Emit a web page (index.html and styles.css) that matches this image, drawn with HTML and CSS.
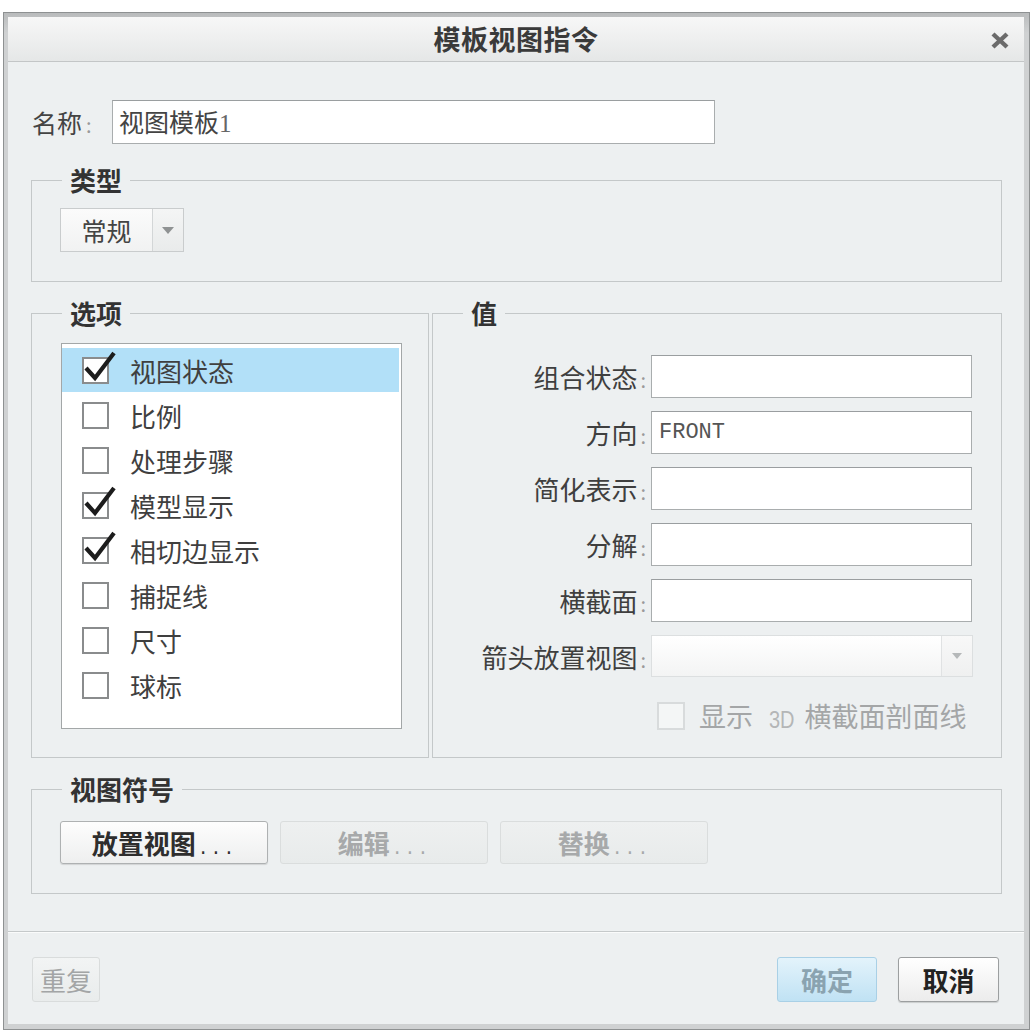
FILE: index.html
```html
<!DOCTYPE html>
<html lang="zh-CN">
<head>
<meta charset="utf-8">
<title>模板视图指令</title>
<link rel="stylesheet" href="styles.css">
</head>
<body>
<div class="dialog">
  <div class="inner">
    <div class="titlebar">
      <span></span>
      <span class="title">模板视图指令</span>
      <span class="close">
        <svg width="20" height="19" viewBox="0 0 20 19"><path d="M3 3 L17 16 M17 3 L3 16" stroke="#6b6b6b" stroke-width="4.4" fill="none"/></svg>
      </span>
    </div>
    <div class="body">
      <div class="name-row">
        <span class="name-label">名称<span class="colon">:</span></span>
        <div class="text-input name-input">视图模板<span class="serif">1</span></div>
      </div>

      <fieldset class="grp type-grp">
        <legend>类型</legend>
        <div class="combo">
          <span class="combo-text">常规</span>
          <span class="combo-arrow"><span class="tri"></span></span>
        </div>
      </fieldset>

      <div class="cols">
        <fieldset class="grp opt-grp">
          <legend>选项</legend>
          <div class="listbox">
            <div class="item selected"><span class="cb checked"><svg width="34" height="34" viewBox="0 0 34 34"><path d="M3 18 L12 28 L31 3" stroke="#1c1c1c" stroke-width="4.2" fill="none"/></svg></span><span>视图状态</span></div>
            <div class="item"><span class="cb"></span><span>比例</span></div>
            <div class="item"><span class="cb"></span><span>处理步骤</span></div>
            <div class="item"><span class="cb checked"><svg width="34" height="34" viewBox="0 0 34 34"><path d="M3 18 L12 28 L31 3" stroke="#1c1c1c" stroke-width="4.2" fill="none"/></svg></span><span>模型显示</span></div>
            <div class="item"><span class="cb checked"><svg width="34" height="34" viewBox="0 0 34 34"><path d="M3 18 L12 28 L31 3" stroke="#1c1c1c" stroke-width="4.2" fill="none"/></svg></span><span>相切边显示</span></div>
            <div class="item"><span class="cb"></span><span>捕捉线</span></div>
            <div class="item"><span class="cb"></span><span>尺寸</span></div>
            <div class="item"><span class="cb"></span><span>球标</span></div>
          </div>
        </fieldset>

        <fieldset class="grp val-grp">
          <legend>值</legend>
          <div class="val-grid">
            <span class="vlabel">组合状态<span class="colon">:</span></span>
            <div class="text-input"></div>
            <span class="vlabel">方向<span class="colon">:</span></span>
            <div class="text-input mono">FRONT</div>
            <span class="vlabel">简化表示<span class="colon">:</span></span>
            <div class="text-input"></div>
            <span class="vlabel">分解<span class="colon">:</span></span>
            <div class="text-input"></div>
            <span class="vlabel">横截面<span class="colon">:</span></span>
            <div class="text-input"></div>
            <span class="vlabel">箭头放置视图<span class="colon">:</span></span>
            <div class="combo wide disabled">
              <span class="combo-text"></span>
              <span class="combo-arrow"><span class="tri"></span></span>
            </div>
            <div class="check-row">
              <span class="cb dis"></span>
              <span>显示<span class="small3d">3D</span>横截面剖面线</span>
            </div>
          </div>
        </fieldset>
      </div>

      <fieldset class="grp sym-grp">
        <legend>视图符号</legend>
        <div class="btn-row">
          <button class="btn bold">放置视图<span class="dots">...</span></button>
          <button class="btn bold dis">编辑<span class="dots">...</span></button>
          <button class="btn bold dis">替换<span class="dots">...</span></button>
        </div>
      </fieldset>
    </div>

    <div class="footer">
      <button class="fbtn dis">重复</button>
      <span class="spacer"></span>
      <button class="fbtn ok">确定</button>
      <button class="fbtn cancel">取消</button>
    </div>
  </div>
</div>
</body>
</html>
```

FILE: styles.css
```css
* { box-sizing: border-box; }

body {
  margin: 0;
  background: #ffffff;
  font-family: "Noto Sans CJK SC", "Noto Sans", sans-serif;
  color: #3d3d3d;
}

.dialog {
  margin: 12px 0 0 3px;
  width: 1027px;
  height: 1018px;
  border: 1px solid #8e9192;
  background: linear-gradient(#b9bbbc, #cfd1d2 20px, #cfd1d2);
  padding: 4px 5px 5px 4px;
  display: flex;
}

.inner {
  flex: 1;
  background: #edf0f1;
  display: flex;
  flex-direction: column;
}

/* title bar */
.titlebar {
  height: 45px;
  display: grid;
  grid-template-columns: 1fr auto 1fr;
  align-items: center;
  background: linear-gradient(#f7f7f7, #eeefef 50%, #e5e7e7);
  border-bottom: 1px solid #c3c6c7;
}
.title {
  font-size: 27px;
  font-weight: 700;
  color: #3a3a3a;
  line-height: 30px;
  letter-spacing: 0.5px;
}
.close {
  justify-self: end;
  margin-right: 14px;
  margin-top: 2px;
  display: flex;
}

.body {
  padding: 0 22px 0 23px;
  display: flex;
  flex-direction: column;
}

/* name row */
.name-row {
  margin-top: 38px;
  display: flex;
  align-items: center;
}
.name-label {
  width: 81px;
  font-size: 25px;
  color: #444;
  padding-left: 1px;
}
.colon {
  color: #9a9a9a;
  font-size: 20px;
  margin-left: 4px;
}
.text-input {
  height: 43px;
  background: #ffffff;
  border: 1px solid #a9adae;
  border-top-color: #9a9ea0;
  font-size: 25px;
  color: #444;
  line-height: 41px;
  padding-left: 6px;
  white-space: nowrap;
}
.name-input {
  width: 603px;
  height: 44px;
}
.serif {
  font-family: "Liberation Serif", serif;
  color: #666;
}
.mono {
  font-family: "Liberation Mono", monospace;
  font-size: 22px;
  color: #555;
  padding-left: 7px;
}

/* fieldsets */
.grp {
  margin: 0;
  padding: 0;
  border: 1px solid #c4c8c9;
  min-width: 0;
}
.grp legend {
  margin-left: 30px;
  padding: 0 8px;
  font-size: 26px;
  font-weight: 700;
  line-height: 30px;
  color: #333;
}

.type-grp {
  margin-top: 21px;
  padding: 13px 0 29px 0;
}
.type-grp .combo {
  margin-left: 28px;
}

/* combo */
.combo {
  width: 124px;
  height: 44px;
  display: flex;
  border: 1px solid #c9cccd;
  background: linear-gradient(#fbfbfb, #f1f2f2);
}
.combo-text {
  flex: 1;
  text-align: center;
  font-size: 25px;
  line-height: 42px;
  color: #444;
}
.combo-arrow {
  width: 31px;
  border-left: 1px solid #d3d6d7;
  display: flex;
  align-items: center;
  justify-content: center;
  background: linear-gradient(#f4f5f5, #e9ebeb);
}
.tri {
  width: 0;
  height: 0;
  border-left: 6px solid transparent;
  border-right: 6px solid transparent;
  border-top: 7px solid #8f9293;
}
.combo.wide {
  width: 322px;
  height: 42px;
}
.combo.disabled {
  border-color: #dcdfe0;
  background: linear-gradient(#ffffff, #f3f4f4);
}
.combo.disabled .combo-arrow {
  border-left-color: #e0e2e3;
  background: linear-gradient(#f8f8f8, #eff0f0);
}
.combo.disabled .tri {
  border-top-color: #b5b8b9;
  border-left-width: 5px;
  border-right-width: 5px;
  border-top-width: 6px;
}

/* columns */
.cols {
  margin-top: 16px;
  height: 460px;
  display: flex;
  gap: 3px;
}
.opt-grp {
  width: 398px;
  padding: 15px 0 0 0;
}
.val-grp {
  flex: 1;
  padding: 27px 0 0 0;
}

/* list */
.listbox {
  margin-left: 29px;
  width: 341px;
  height: 386px;
  background: #ffffff;
  border: 1px solid #a3a7a8;
  padding: 4px 2px 0 0;
}
.item {
  height: 45px;
  display: flex;
  align-items: center;
  padding-left: 20px;
  font-size: 26px;
  color: #3f3f3f;
}
.item.selected {
  background: #b2e0f8;
  height: 44px;
  margin-bottom: 1px;
}
.cb {
  width: 27px;
  height: 27px;
  border: 2px solid #8a8c8d;
  background: #fff;
  margin-right: 21px;
  position: relative;
  flex: none;
}
.cb svg {
  position: absolute;
  left: -1px;
  top: -9px;
}
.cb.dis {
  border: 2px solid #d8dbdc;
  background: #f4f6f6;
  width: 28px;
  height: 28px;
  margin-right: 14px;
}

/* values grid */
.val-grid {
  display: grid;
  grid-template-columns: 218px 321px;
  grid-auto-rows: 43px;
  row-gap: 13px;
}
.vlabel {
  text-align: right;
  font-size: 26px;
  line-height: 43px;
  color: #3f3f3f;
  padding-right: 5px;
}
.vlabel .colon {
  margin-left: 3px;
}
.check-row {
  grid-column: 2;
  margin-top: 6px;
  padding-left: 6px;
  display: flex;
  align-items: center;
  font-size: 27px;
  color: #a4a6a7;
  white-space: nowrap;
}
.small3d {
  font-family: "Liberation Sans", sans-serif;
  font-size: 20px;
  color: #b4b6b7;
  margin: 0 10px 0 16px;
  display: inline-block;
  transform: scaleY(1.15);
}

/* symbol group */
.sym-grp {
  margin-top: 16px;
  padding: 17px 0 29px 0;
}
.btn-row {
  margin-left: 28px;
  display: flex;
  gap: 12px;
}
.btn {
  width: 208px;
  height: 43px;
  font-family: inherit;
  font-size: 26px;
  line-height: 41px;
  padding: 0;
  border: 1px solid #aeb1b2;
  border-radius: 3px;
  background: linear-gradient(#fdfdfd, #eeefef);
  color: #2e2e2e;
  box-shadow: 0 1px 1px rgba(0,0,0,0.12);
}
.btn.bold {
  font-weight: 700;
}
.btn.dis {
  border-color: #dadddd;
  background: linear-gradient(#eef0f0, #e8ebeb);
  color: #a7a9aa;
  box-shadow: none;
}
.dots {
  font-family: "Liberation Mono", monospace;
  font-size: 18px;
  font-weight: 400;
  letter-spacing: 2px;
  margin-left: 2px;
}

/* footer */
.footer {
  margin-top: auto;
  height: 93px;
  border-top: 1px solid #c5c9ca;
  box-shadow: inset 0 1px 0 #fafbfb;
  padding: 25px 25px 0 24px;
  display: flex;
  align-items: flex-start;
  gap: 21px;
}
.spacer {
  flex: 1;
}
.fbtn {
  height: 45px;
  padding: 0;
  font-family: inherit;
  font-size: 26px;
  border-radius: 3px;
  line-height: 43px;
}
.fbtn.dis {
  width: 68px;
  border: 1px solid #d9dcdc;
  background: linear-gradient(#f2f4f4, #e9ecec);
  color: #a3a5a6;
}
.fbtn.ok {
  width: 100px;
  border: 1px solid #a9d0e6;
  background: linear-gradient(#e3f3fb, #c0e2f4);
  color: #8aa3b0;
  font-weight: 700;
}
.fbtn.cancel {
  width: 101px;
  border: 1px solid #9c9fa0;
  background: linear-gradient(#ffffff, #ececec);
  color: #222;
  font-weight: 700;
  box-shadow: 0 1px 1px rgba(0,0,0,0.15);
}
```
